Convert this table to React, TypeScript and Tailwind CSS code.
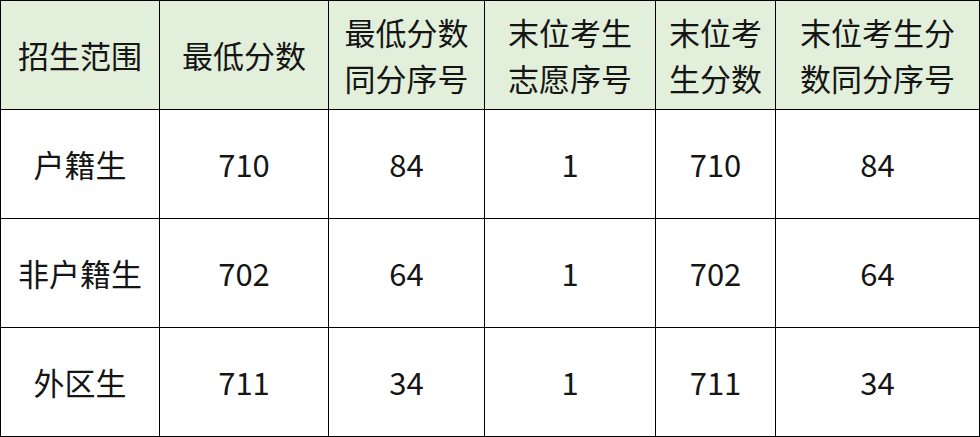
import React from 'react';

const headers = [
  { lines: ['招生范围'], width: 159 },
  { lines: ['最低分数'], width: 169 },
  { lines: ['最低分数', '同分序号'], width: 156 },
  { lines: ['末位考生', '志愿序号'], width: 171 },
  { lines: ['末位考', '生分数'], width: 120 },
  { lines: ['末位考生分', '数同分序号'], width: 204 },
];

const rows = [
  ['户籍生', '710', '84', '1', '710', '84'],
  ['非户籍生', '702', '64', '1', '702', '64'],
  ['外区生', '711', '34', '1', '711', '34'],
];

export default function App() {
  return (
    <div
      className="w-[980px] h-[437px] bg-white"
      style={{ fontFamily: '"Noto Sans CJK SC", "Noto Sans", sans-serif' }}
    >
      <table className="border-collapse table-fixed w-[979px] text-[31px] text-[#151515] leading-[46px]">
        <colgroup>
          {headers.map((h, i) => (
            <col key={i} style={{ width: h.width }} />
          ))}
        </colgroup>
        <thead>
          <tr className="h-[109px] bg-[#e2efda]">
            {headers.map((h, i) => (
              <th key={i} className="border-[1.5px] border-black font-normal text-center align-middle p-0">
                {h.lines.map((l, j) => (
                  <div key={j}>{l}</div>
                ))}
              </th>
            ))}
          </tr>
        </thead>
        <tbody>
          {rows.map((r, i) => (
            <tr key={i} className="h-[109px]">
              {r.map((c, j) => (
                <td key={j} className="border-[1.5px] border-black text-center align-middle p-0">
                  {c}
                </td>
              ))}
            </tr>
          ))}
        </tbody>
      </table>
    </div>
  );
}
